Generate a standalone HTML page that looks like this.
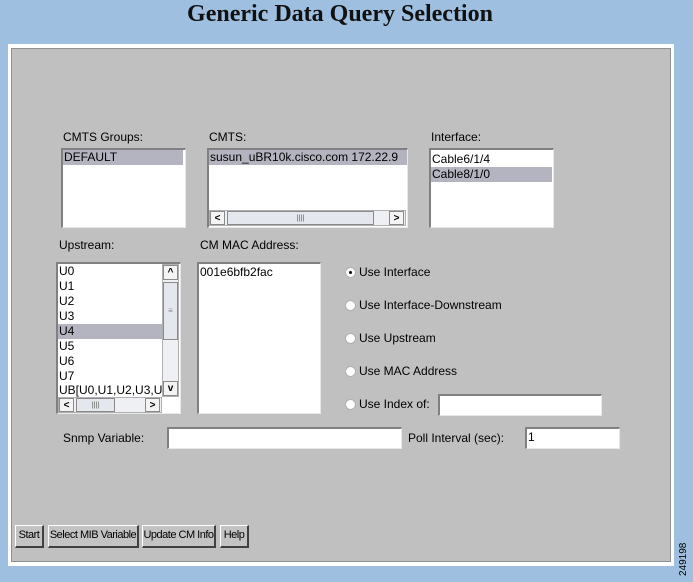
<!DOCTYPE html>
<html><head><meta charset="utf-8"><style>
*{margin:0;padding:0;box-sizing:border-box}
body{width:693px;height:582px;background:#9ebfdf;position:relative;overflow:hidden;font-family:"Liberation Sans",Arial,sans-serif;font-size:12px;color:#000}
.a{position:absolute}
.t{white-space:nowrap;line-height:14px}
.box{position:absolute;background:#fff;border-top:2px solid #808080;border-left:2px solid #808080;border-right:1px solid #e8e8e8;border-bottom:1px solid #e8e8e8}
.sel{background:#b4b4c0}
.item{position:absolute;left:0;white-space:nowrap;line-height:15px;padding-left:1px}
.sb{position:absolute;background:#eef0f4;border:1px solid #b0b0b0}
.arr{position:absolute;background:#f4f4f4;border:1px solid #8a8a8a;font-size:10px;text-align:center;line-height:13px;font-weight:bold}
.btn{position:absolute;top:525px;height:23px;background:#c3c3c3;border-top:1px solid #fff;border-left:1px solid #fff;border-right:2px solid #404040;border-bottom:2px solid #404040;text-align:center;line-height:19px;white-space:nowrap;font-size:11px;letter-spacing:-0.5px;overflow:hidden}
.rad{position:absolute;width:11px;height:11px;border-radius:50%;background:#fff;border:1px solid #b0b0b0;left:345px}
</style></head><body>
<div class="a" style="left:0;top:1px;width:680px;text-align:center;font-family:'Liberation Serif',serif;font-weight:bold;font-size:24px;color:#111">Generic Data Query Selection</div>
<div class="a" style="left:8px;top:44px;width:666px;height:522px;background:#fff"></div>
<div class="a" style="left:11px;top:48px;width:660px;height:514px;background:#c0c0c0;border:1px solid #909090"></div>

<div class="a t" style="left:63px;top:130px">CMTS Groups:</div>
<div class="box" style="left:61px;top:148px;width:125px;height:80px"><div class="item sel" style="top:0;width:120px">DEFAULT</div></div>

<div class="a t" style="left:209px;top:130px">CMTS:</div>
<div class="box" style="left:207px;top:148px;width:201px;height:80px;overflow:hidden"><div class="item sel" style="top:0;width:198px">susun_uBR10k.cisco.com 172.22.9</div>
<div class="sb" style="left:0;top:60px;width:197px;height:16px"></div>
<div class="arr" style="left:1px;top:61px;width:15px;height:14px">&lt;</div>
<div class="arr" style="left:18px;top:61px;width:147px;height:14px;font-size:7px;color:#888;background:#e4e8ee">||||</div>
<div class="arr" style="left:180px;top:61px;width:15px;height:14px">&gt;</div></div>

<div class="a t" style="left:431px;top:130px">Interface:</div>
<div class="box" style="left:429px;top:148px;width:125px;height:80px"><div class="item" style="top:2px">Cable6/1/4</div><div class="item sel" style="top:17px;width:121px">Cable8/1/0</div></div>

<div class="a t" style="left:59px;top:238px">Upstream:</div>
<div class="box" style="left:56px;top:262px;width:125px;height:152px;overflow:hidden">
<div class="item" style="top:0">U0</div><div class="item" style="top:15px">U1</div><div class="item" style="top:30px">U2</div><div class="item" style="top:45px">U3</div>
<div class="item sel" style="top:60px;width:104px">U4</div><div class="item" style="top:75px">U5</div><div class="item" style="top:90px">U6</div><div class="item" style="top:105px">U7</div><div class="item" style="top:119px">UB[U0,U1,U2,U3,U</div>
<div class="sb" style="left:104px;top:0;width:17px;height:133px"></div>
<div class="arr" style="left:105px;top:1px;width:15px;height:15px">^</div>
<div class="arr" style="left:105px;top:18px;width:15px;height:58px;background:#e4e8ee;font-size:8px;line-height:56px;color:#888">≡</div>
<div class="arr" style="left:105px;top:117px;width:15px;height:15px">v</div>
<div class="sb" style="left:0;top:133px;width:104px;height:16px"></div>
<div class="arr" style="left:1px;top:134px;width:15px;height:14px">&lt;</div>
<div class="arr" style="left:18px;top:134px;width:39px;height:14px;font-size:7px;color:#888;background:#e4e8ee">||||</div>
<div class="arr" style="left:87px;top:134px;width:15px;height:14px">&gt;</div></div>

<div class="a t" style="left:200px;top:238px">CM MAC Address:</div>
<div class="box" style="left:197px;top:262px;width:124px;height:152px"><div class="item" style="top:1px">001e6bfb2fac</div></div>

<div class="rad" style="top:267px"><div style="position:absolute;left:3px;top:3px;width:3px;height:3px;background:#000;border-radius:50%"></div></div>
<div class="a t" style="left:359px;top:265px">Use Interface</div>
<div class="rad" style="top:300px"></div><div class="a t" style="left:359px;top:298px">Use Interface-Downstream</div>
<div class="rad" style="top:333px"></div><div class="a t" style="left:359px;top:331px">Use Upstream</div>
<div class="rad" style="top:366px"></div><div class="a t" style="left:359px;top:364px">Use MAC Address</div>
<div class="rad" style="top:399px"></div><div class="a t" style="left:359px;top:397px">Use Index of:</div>
<div class="box" style="left:438px;top:394px;width:164px;height:22px"></div>

<div class="a t" style="left:63px;top:431px">Snmp Variable:</div>
<div class="box" style="left:167px;top:427px;width:235px;height:22px"></div>
<div class="a t" style="left:408px;top:431px">Poll Interval (sec):</div>
<div class="box" style="left:525px;top:427px;width:95px;height:22px"><div class="item" style="top:1px">1</div></div>

<div class="btn" style="left:15px;width:29px">Start</div>
<div class="btn" style="left:48px;width:91px">Select MIB Variable</div>
<div class="btn" style="left:142px;width:74px">Update CM Info</div>
<div class="btn" style="left:220px;width:29px">Help</div>

<div class="a" style="left:678px;top:576px;transform:rotate(-90deg);transform-origin:0 0;font-size:10px;white-space:nowrap">249198</div>
</body></html>
